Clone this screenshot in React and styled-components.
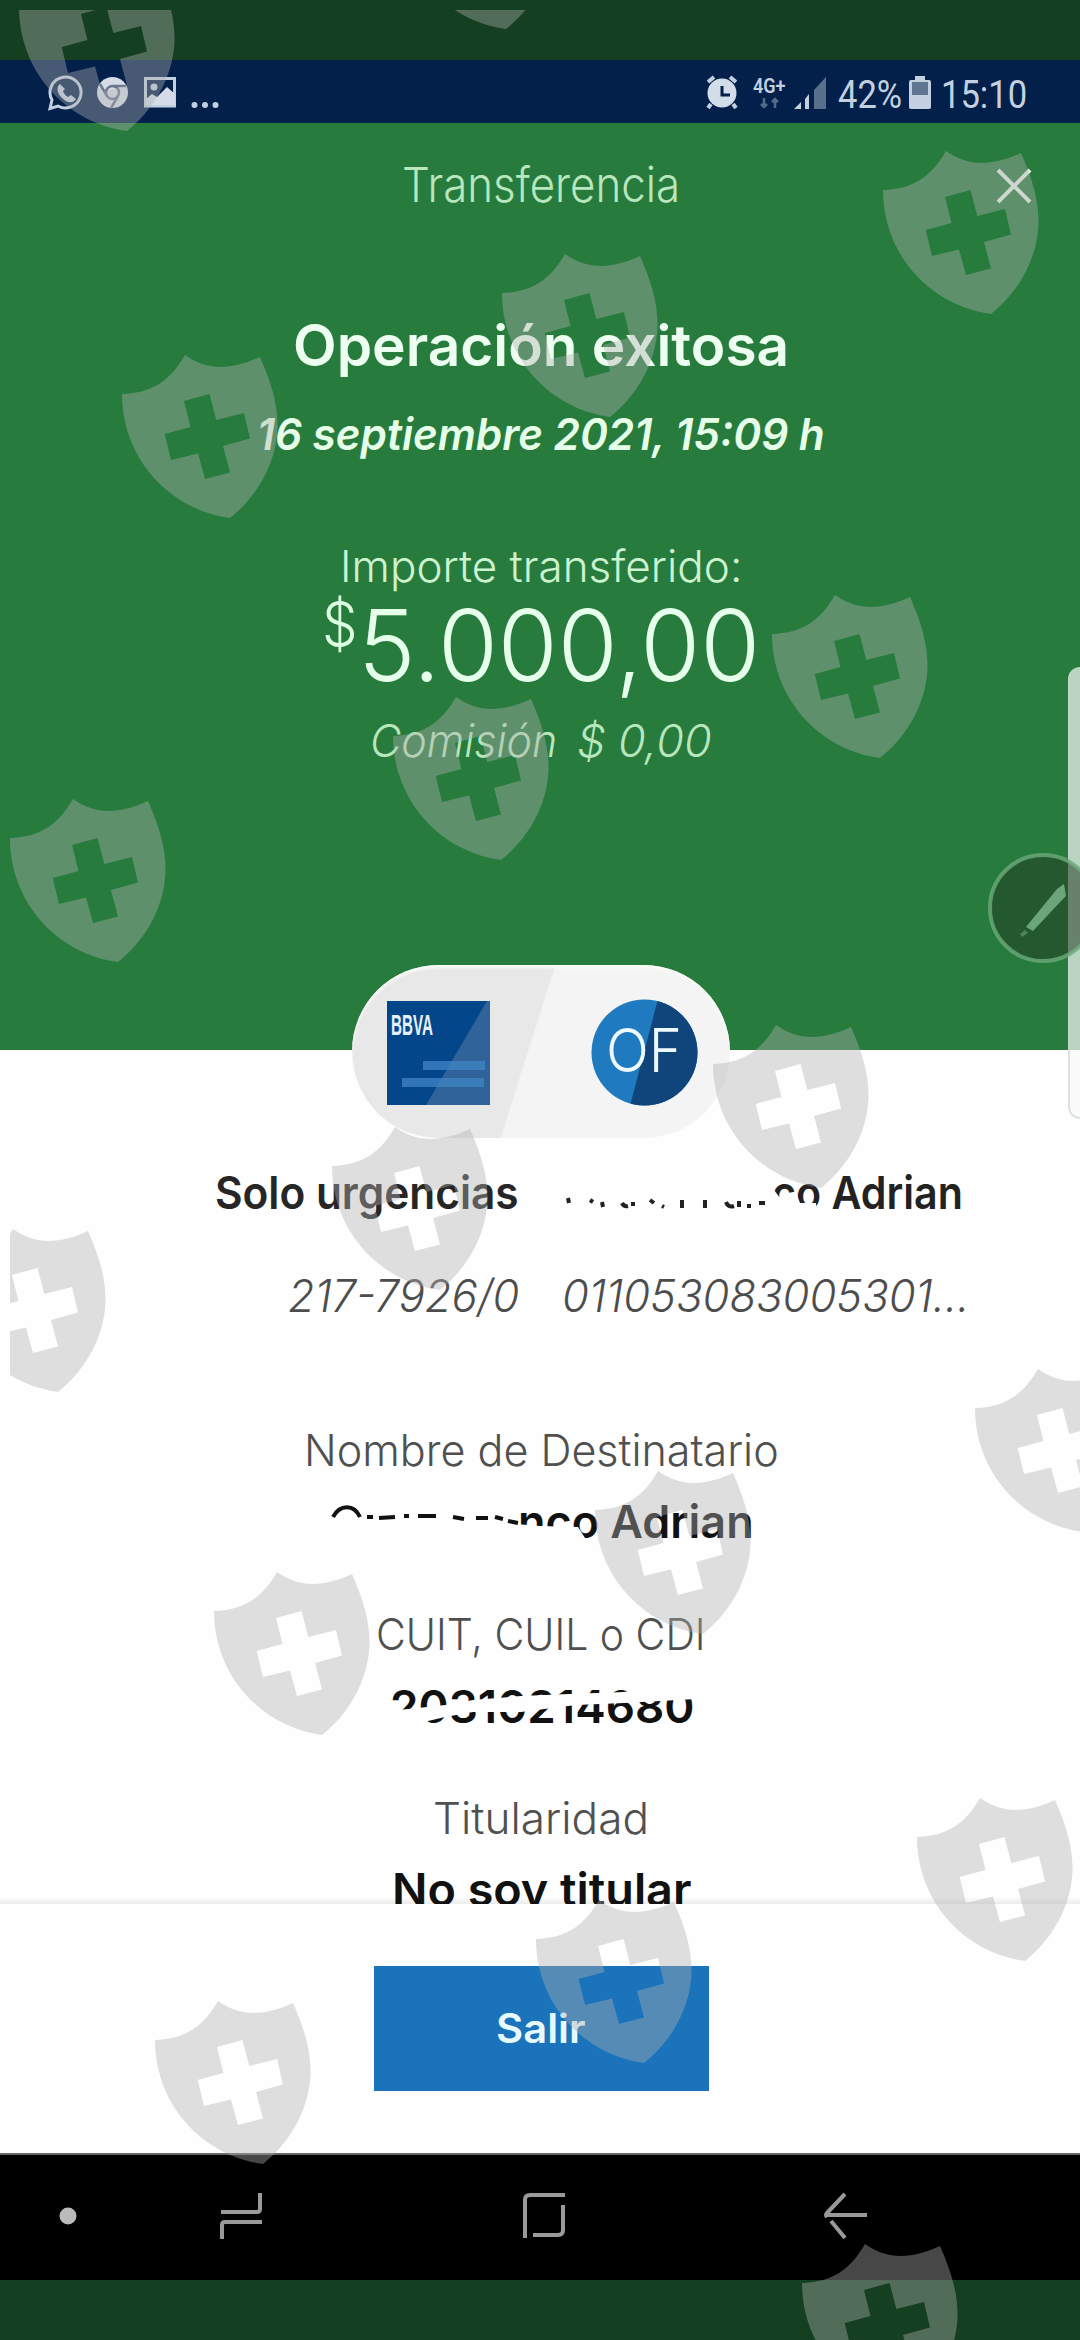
import React, { useLayoutEffect, useRef, useState } from "react";
import styled, { createGlobalStyle } from "styled-components";

const GlobalStyle = createGlobalStyle`
  * { box-sizing: border-box; }
  body {
    margin: 0;
    font-family: Inter, "Liberation Sans", sans-serif;
  }
`;

const Screen = styled.div`
  position: relative;
  display: flex;
  flex-direction: column;
  width: 1080px;
  height: 2340px;
  overflow: hidden;
  background: #fefefe;
`;

const Letterbox = styled.div`
  height: 60px;
  flex: none;
  background: #143f20;
`;

const StatusBar = styled.div`
  display: flex;
  justify-content: space-between;
  height: 63px;
  flex: none;
  padding: 15px 53px 0 47px;
  background: #03204a;
  font-family: Roboto, sans-serif;
  color: #c3d0e0;
`;

const StatusGroup = styled.div`
  display: flex;
  align-items: flex-start;
  gap: ${(p) => p.$gap || 0}px;
`;

const Network = styled.div`
  display: flex;
  flex-direction: column;
  align-items: center;
  width: 33px;
  margin: 2px 8px 0 15px;
`;

const Header = styled.div`
  position: relative;
  display: flex;
  flex-direction: column;
  align-items: center;
  height: 927px;
  flex: none;
  background: #277c3d;
`;

const Line = styled.div`
  display: flex;
  justify-content: center;
  margin-top: ${(p) => p.$top || 0}px;
  margin-left: ${(p) => p.$shift || 0}px;
  gap: ${(p) => p.$gap || 0}px;
`;

const TextBox = styled.div`
  width: ${(p) => p.$width}px;
  height: ${(p) => p.$size}px;
  flex: none;
  font-size: ${(p) => p.$size * 0.985}px;
  line-height: 1;
  font-weight: ${(p) => p.$weight || 400};
  font-style: ${(p) => (p.$italic ? "italic" : "normal")};
  color: ${(p) => p.$color || "inherit"};
  white-space: pre;
`;

const Stretch = styled.span`
  display: inline-block;
  vertical-align: top;
  margin-top: 0.06em;
  line-height: 1;
  transform-origin: 0 0;

  ${StatusBar} & {
    margin-top: 0;
  }
`;

const CloseButton = styled.button`
  position: absolute;
  top: 44px;
  right: 47px;
  width: 38px;
  height: 38px;
  padding: 0;
  border: 0;
  background: none;
`;

const Body = styled.div`
  height: 854px;
  flex: none;
`;

const Pill = styled.div`
  position: relative;
  display: flex;
  align-items: center;
  justify-content: space-between;
  width: 378px;
  height: 173px;
  margin: -85px 0 0 352px;
  padding: 2px 32px 0 35px;
  border-radius: 87px;
  background: linear-gradient(107.6deg, #e8e8e8 0 46.7%, #f4f4f4 47.3%);
  box-shadow: inset 0 3px 3px #f8fbf8;
`;

const Details = styled.div`
  position: relative;
  height: 766px;
  overflow: hidden;
  background: linear-gradient(#fefefe, #ebebeb) 0 100% / 100% 7px no-repeat;
`;

const Accounts = styled.div`
  display: grid;
  grid-template-columns: 519px 1fr;
  column-gap: 43px;
  margin-top: ${(p) => p.$top}px;
  justify-items: start;

  & > :first-child {
    justify-self: end;
  }
`;

const Scribble = styled.svg`
  position: absolute;
  left: 0;
  top: 0;
`;

const Footer = styled.div`
  display: flex;
  justify-content: center;
  height: 249px;
  flex: none;
  padding-top: 62px;
  background: #fefefe;
`;

const ExitButton = styled.button`
  display: flex;
  align-items: center;
  justify-content: center;
  width: 335px;
  height: 125px;
  margin-left: 2px;
  padding: 0 0 3px;
  border: 0;
  background: #1a73bb;
  font-family: inherit;
  text-align: left;
`;

const NavBar = styled.div`
  display: flex;
  align-items: center;
  height: 127px;
  flex: none;
  padding: 0 0 3px 59px;
  background: #000;
  border-top: 2px solid #666;
`;

const NavIcon = styled.svg`
  margin-right: ${(p) => p.$after || 0}px;
  fill: none;
  stroke: #999;
  stroke-width: 4;
`;

const EdgePanel = styled.div`
  position: absolute;
  left: 1068px;
  top: 667px;
  width: 24px;
  height: 452px;
  border: 2px solid rgba(200, 212, 203, 0.6);
  border-radius: 14px;
  background: rgba(250, 250, 250, 0.7);
`;

const PenBubble = styled.svg`
  position: absolute;
  left: 987px;
  top: 852px;
`;

const Watermark = styled.svg`
  position: absolute;
  left: 0;
  top: 0;
  pointer-events: none;
`;

// squeezes a single line of text to a given width
const Fit = ({ width, size, children, ...rest }) => {
  const ref = useRef(null);
  const [scale, setScale] = useState(1);

  useLayoutEffect(() => {
    setScale(width / ref.current.offsetWidth);
  }, [width, children]);

  return (
    <TextBox $width={width} $size={size} {...rest}>
      <Stretch ref={ref} style={{ transform: `scaleX(${scale})` }}>{children}</Stretch>
    </TextBox>
  );
};

const shields = [
  [398, -135], [19, -33],
  [883, 150], [502, 253], [122, 354],
  [772, 594], [393, 696], [10, 798],
  [713, 1024], [332, 1126], [-50, 1228],
  [975, 1368], [595, 1470], [214, 1571],
  [917, 1797], [536, 1899], [155, 2000],
  [802, 2243],
];

const Shields = () => (
  <Watermark width="1080" height="2340">
    <defs>
      <clipPath id="frame">
        <rect x="10" y="10" width="1070" height="2330" />
      </clipPath>
      <path
        id="shield"
        fillRule="evenodd"
        d="M0 40C30 39 48 27 63 1C85 17 110 16 138 3C149 28 156 50 155.500 74C154 113 132 145 108 164C48 156 0 105 0 40Z
           M62 47L87.500 40L94.300 66L122 59L128 84.500L101 92L108 118.500L83 125L76 99.500L49 106L42.700 80L68.500 73Z"
      />
    </defs>
    <g clipPath="url(#frame)" fill="rgb(177,177,177)" fillOpacity="0.405">
      {shields.map(([x, y]) => (
        <use key={`${x}-${y}`} href="#shield" x={x} y={y} />
      ))}
    </g>
  </Watermark>
);

const LeftStatus = () => (
  <StatusGroup>
    <svg width="176" height="36" viewBox="47 75 176 36">
      <path d="M50 108.500l2-8.500a15.500 15.500 0 1 1 6 6z" fill="none" stroke="#c3d0e0" strokeWidth="3" />
      <path d="M60 84c-4 3-3 9 2 14s11 6 14 1l-5-4-3 2c-2-1-4-3-5-6l2-2z" fill="#c3d0e0" />
      <circle cx="112.500" cy="92.500" r="15.500" fill="#d5dce8" />
      <circle cx="112.500" cy="92.500" r="6.500" fill="#d5dce8" stroke="#6d7890" strokeWidth="2.500" />
      <path d="M112.500 86h14M107 96l-7-12M118 96l-7 12" stroke="#6d7890" strokeWidth="2.500" />
      <rect x="145.500" y="78.500" width="29" height="27.500" fill="none" stroke="#c3d0e0" strokeWidth="3" />
      <path d="M146 105V99l6-5 5 3 10-10 8 7v11z" fill="#d5dce8" />
      <circle cx="154" cy="87" r="3.500" fill="#c3d0e0" />
      <g fill="#c3d0e0">
        <circle cx="194.500" cy="105" r="3" />
        <circle cx="205" cy="105" r="3" />
        <circle cx="215.500" cy="105" r="3" />
      </g>
    </svg>
  </StatusGroup>
);

const RightStatus = () => (
  <StatusGroup>
    <svg width="32" height="35" viewBox="0 0 32 35">
      <circle cx="16" cy="18" r="14.500" fill="#d3dce9" />
      <path d="M2 7l6-5M30 7l-6-5M5 29l-3 4M27 29l3 4" stroke="#c3d0e0" strokeWidth="4" />
      <path d="M16 11v9h8" fill="none" stroke="#03204a" strokeWidth="3" />
    </svg>
    <Network>
      <Fit width={33} size={20} $weight={600}>4G+</Fit>
      <svg width="20" height="12" viewBox="0 0 20 12" stroke="#52698a" strokeWidth="2.500" fill="none">
        <path d="M4 1v9M1 7l3 3 3-3M15 11V2M12 5l3-3 3 3" />
      </svg>
    </Network>
    <svg width="33" height="35" viewBox="0 0 33 35">
      <path d="M0 34l7-7v7zM11 34V24l4-5v15z" fill="#c3d0e0" />
      <path d="M20 34V15L32 2v32z" fill="#58708c" />
    </svg>
    <Line $shift={11} $gap={6}>
      <Fit width={64} size={40}>42%</Fit>
    </Line>
    <Line $shift={6} $top={1}>
      <svg width="24" height="34" viewBox="0 0 24 34">
        <path d="M7 0h10v4H7z" fill="#c3d0e0" />
        <rect x="1" y="4" width="22" height="29" rx="2" fill="#c3d0e0" />
        <rect x="4" y="6" width="16" height="13" fill="#60758f" />
      </svg>
    </Line>
    <Line $shift={9}>
      <Fit width={86} size={40}>15:10</Fit>
    </Line>
  </StatusGroup>
);

const CardIcon = () => (
  <svg width="103" height="104" viewBox="0 0 103 104">
    <rect width="103" height="104" fill="#04468a" />
    <path d="M100 0h3v104H39z" fill="#2f6399" />
    <path d="M36 60h62v9H36zM15 77h82v9H15z" fill="#3f86c6" fillOpacity="0.75" />
    <text x="4" y="34" fontFamily="Liberation Sans" fontWeight="700" fontSize="29" textLength="42" lengthAdjust="spacingAndGlyphs" fill="#e6f0fa">BBVA</text>
  </svg>
);

const Avatar = () => (
  <svg width="107" height="107" viewBox="0 0 107 107">
    <defs>
      <clipPath id="avatar">
        <circle cx="53.500" cy="53.500" r="53" />
      </clipPath>
    </defs>
    <g clipPath="url(#avatar)">
      <rect width="107" height="107" fill="#207abf" />
      <path d="M67 0h40v107H39z" fill="#0f457b" />
    </g>
    <text x="15" y="73" fontFamily="Inter" fontWeight="300" fontSize="60" textLength="76" lengthAdjust="spacingAndGlyphs" fill="#eef8ff">OF</text>
  </svg>
);

const Redactions = () => (
  <Scribble width="1080" height="766" viewBox="0 1138 1080 766" fill="none">
    <path d="M766 1186l8 4 6 8 16-6 4 11 16 0v9h-50z" fill="#fefefe" />
    <path
      d="M568 1198l1 5M590 1200l3 2M602 1202l1 5M622 1203q2 4 6 3M633 1202v4M650 1200l4 3M662 1206l2 1M682 1200v8M705 1200v8M726 1202q2 6 8 4M739 1201v6M747 1206h4M759 1203h6"
      stroke="#222"
      strokeWidth="4"
    />
    <path d="M516 1524l24 2 38 1 9 14v5h-71z" fill="#fefefe" />
    <path
      d="M333 1517c7-13 21-13 27 0M367 1517h6M379 1518l16-1M404 1516h5M418 1516h18M453 1517l11 2M476 1518h12M495 1517l8 2M508 1521l10 2"
      stroke="#111"
      strokeWidth="4"
    />
    <path
      d="M388 1711l30-3 27-3 28-5 48-4 48-2 55-2 18-4 12-4 42-4v19l-72 4-48 2-55 7h-48l-28 5-17 4v4h-40z"
      fill="#fefefe"
    />
  </Scribble>
);

const App = () => {
  return (
    <>
      <GlobalStyle />
      <Screen>
        <Letterbox />
        <StatusBar>
          <LeftStatus />
          <RightStatus />
        </StatusBar>

        <Header>
          <Line $top={35} $shift={2}>
            <Fit width={278} size={49} $weight={300} $color="#b9e6bd">Transferencia</Fit>
          </Line>
          <CloseButton>
            <svg width="38" height="38" viewBox="0 0 38 38" stroke="#e4f0e2" strokeWidth="4">
              <path d="M3 3l32 32M35 3L3 35" />
            </svg>
          </CloseButton>
          <Line $top={107} $shift={1}>
            <Fit width={496} size={58} $weight={600} $color="#ecfff0">Operación exitosa</Fit>
          </Line>
          <Line $top={37} $shift={2}>
            <Fit width={568} size={45} $weight={600} $italic $color="#e6ffe9">16 septiembre 2021, 15:09 h</Fit>
          </Line>
          <Line $top={87} $shift={2}>
            <Fit width={402} size={45} $weight={300} $color="#cdf3d0">Importe transferido:</Fit>
          </Line>
          <Line $top={4} $shift={1}>
            <Fit width={36} size={62} $weight={300} $color="#dcffe2">$</Fit>
            <Fit width={402} size={101} $weight={300} $color="#e6ffea">5.000,00</Fit>
          </Line>
          <Line $top={24} $gap={20} $shift={2}>
            <Fit width={187} size={46} $weight={300} $italic $color="#b9e6bd">Comisión</Fit>
            <Fit width={135} size={46} $weight={300} $italic $color="#b9e6bd">$ 0,00</Fit>
          </Line>
        </Header>

        <Body>
          <Pill>
            <CardIcon />
            <Avatar />
          </Pill>
          <Details>
            <Accounts $top={29}>
              <Fit width={304} size={46} $weight={600} $color="#262626">Solo urgencias</Fit>
              <Line $shift={210}>
                <Fit width={191} size={46} $weight={600} $color="#222">co Adrian</Fit>
              </Line>
            </Accounts>
            <Accounts $top={57}>
              <Fit width={231} size={46} $weight={300} $italic $color="#4d4d4d">217-7926/0</Fit>
              <Fit width={408} size={46} $weight={300} $italic $color="#4d4d4d">011053083005301...</Fit>
            </Accounts>
            <Line $top={109} $shift={3}>
              <Fit width={475} size={45} $weight={300} $color="#505050">Nombre de Destinatario</Fit>
            </Line>
            <Line $top={26} $shift={192}>
              <Fit width={236} size={46} $weight={600} $color="#111">nco Adrian</Fit>
            </Line>
            <Line $top={67} $shift={1}>
              <Fit width={330} size={45} $weight={300} $color="#505050">CUIT, CUIL o CDI</Fit>
            </Line>
            <Line $top={27} $shift={3}>
              <Fit width={304} size={46} $weight={600} $color="#111">20310214680</Fit>
            </Line>
            <Line $top={66} $shift={2}>
              <Fit width={216} size={45} $weight={300} $color="#505050">Titularidad</Fit>
            </Line>
            <Line $top={26} $shift={3}>
              <Fit width={300} size={46} $weight={600} $color="#111">No soy titular</Fit>
            </Line>
            <Redactions />
          </Details>
        </Body>

        <Footer>
          <ExitButton>
            <Fit width={90} size={41} $weight={600} $color="#e8f8ff">Salir</Fit>
          </ExitButton>
        </Footer>

        <NavBar>
          <NavIcon width="18" height="18" viewBox="0 0 18 18" $after={142}>
            <circle cx="9" cy="9" r="8.500" fill="#bbb" stroke="none" />
          </NavIcon>
          <NavIcon width="44" height="50" viewBox="0 0 44 50" $after={257}>
            <path d="M41 2v16q0 3-3 3H2M3 48V34q0-3 3-3h37" />
          </NavIcon>
          <NavIcon width="48" height="50" viewBox="0 0 48 50" $after={256}>
            <path d="M5 47V9q0-5 5-5h35M43 14v25q0 5-5 5H13" />
          </NavIcon>
          <NavIcon width="44" height="50" viewBox="0 0 44 50">
            <path d="M21 3L3 22q-2 2 0 4M1 24h42M7 30l14 17" />
          </NavIcon>
        </NavBar>
        <Letterbox />

        <EdgePanel />
        <PenBubble width="93" height="112" viewBox="0 0 93 112">
          <circle cx="56" cy="56" r="53" fill="rgb(35,60,38)" fillOpacity="0.55" stroke="#6bab7b" strokeOpacity="0.8" strokeWidth="4" />
          <path d="M39 75l31-38 7-5 2 12-4 4-29 31z" fill="#6ba57a" />
          <path d="M33 82l5-4 3 3-6 4z" fill="#4d8359" />
        </PenBubble>
        <Shields />
      </Screen>
    </>
  );
};

export default App;
